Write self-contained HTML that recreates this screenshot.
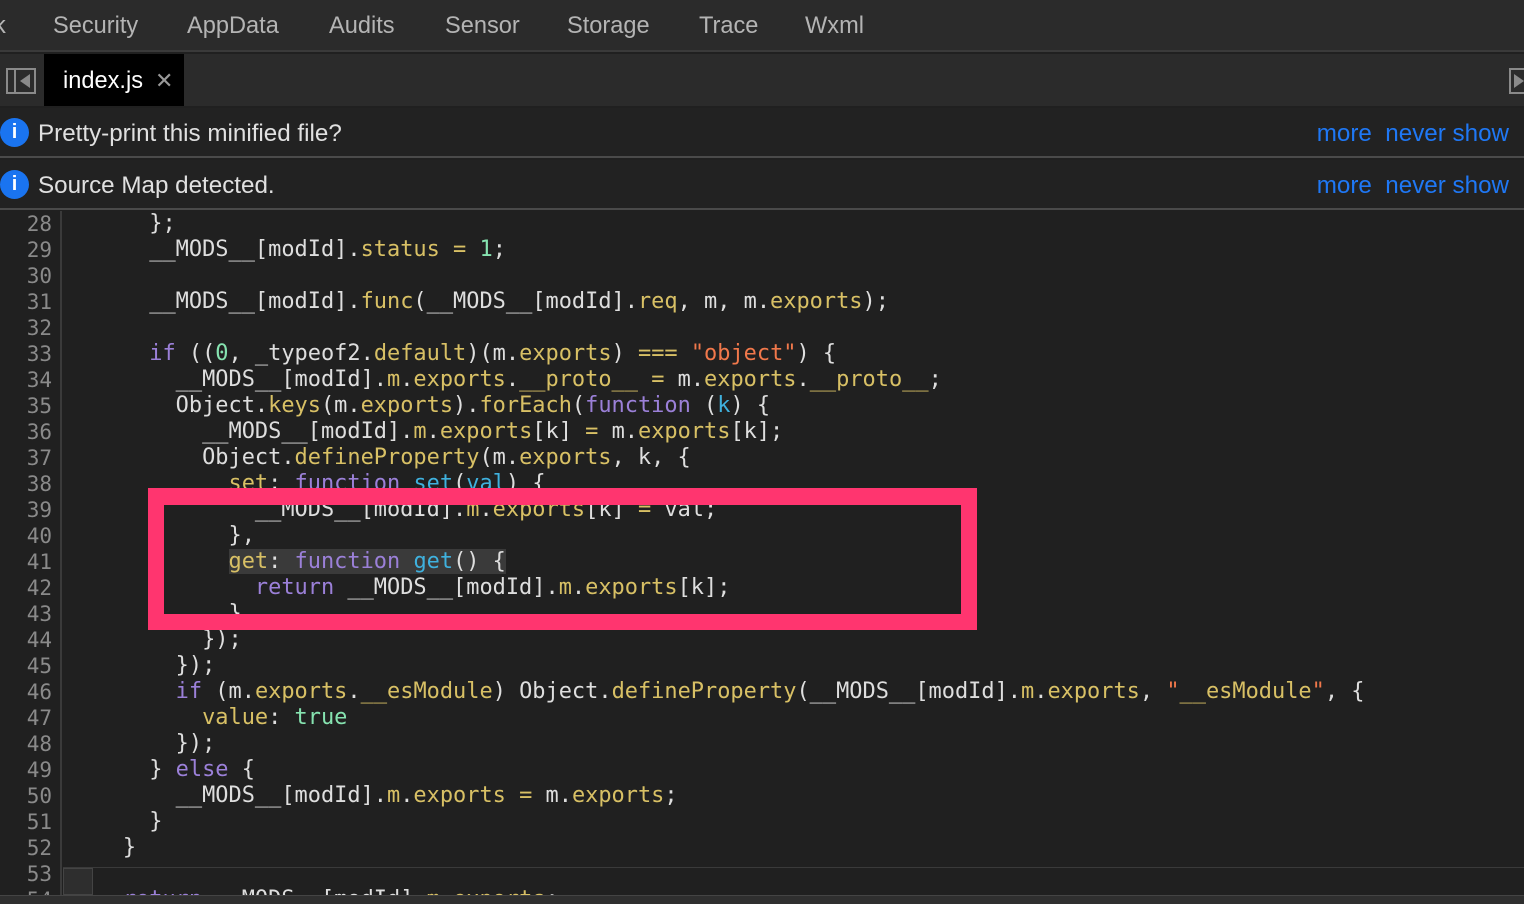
<!DOCTYPE html>
<html><head><meta charset="utf-8"><style>
*{margin:0;padding:0;box-sizing:border-box}
body{width:1524px;height:904px;overflow:hidden;background:#202020;font-family:"Liberation Sans",sans-serif;position:relative}
.top{position:absolute;left:0;top:0;width:1524px;height:52px;background:#2b2b2b;border-bottom:2px solid #3a3a3a}
.top span{position:absolute;top:13px;font-size:23.6px;color:#b4b4b4}
.tabs{position:absolute;left:0;top:54px;width:1524px;height:52px;background:#2b2b2b}
.tab{position:absolute;left:44px;top:0;width:140px;height:52px;background:#000;color:#fff;font-size:23.6px;padding:14px 0 0 19px}
.tab i{font-style:normal;color:#999;margin-left:12px;font-size:22px}
.info{position:absolute;left:0;width:1524px;height:50px;background:#222;border-bottom:2px solid #4a4a4a;color:#e0e0e0;font-size:24.2px}
.info .ic{position:absolute;left:0;top:10px;width:29px;height:29px;border-radius:50%;background:#1a74f0;color:#fff;font-weight:bold;font-size:20px;text-align:center;line-height:29px}
.info .t{position:absolute;left:38px;top:12px}
.info .l{position:absolute;right:15px;top:12px;color:#1f78f5}
.gut{position:absolute;left:0;top:211px;width:62px;height:684px;border-right:2px solid #3a3a3a;overflow:hidden}
.ln{position:absolute;right:8px;font-family:"DejaVu Sans Mono","Liberation Mono",monospace;font-size:21px;color:#8a8a8a;line-height:26px}
.code{position:absolute;left:70px;top:211px;width:1454px;height:684px;overflow:hidden;font-family:"DejaVu Sans Mono","Liberation Mono",monospace;font-size:21.95px;color:#dedede;white-space:pre;line-height:26px}
.k{color:#9b80d8}.p{color:#d8c065}.n{color:#86e3b0}.s{color:#f1784b}.c{color:#3fb1de}
.hl{background:#3a3a3a}
.box{position:absolute;left:148px;top:488px;width:829px;height:142px;border:16px solid #ff356f;border-top-width:17px}
</style></head><body>
<div class="top">
<span style="left:-6px">k</span><span style="left:53px">Security</span><span style="left:187px">AppData</span><span style="left:329px">Audits</span><span style="left:445px">Sensor</span><span style="left:567px">Storage</span><span style="left:699px">Trace</span><span style="left:805px">Wxml</span>
</div>
<div class="tabs">
<div style="position:absolute;left:6px;top:14px;width:30px;height:26px;border:2px solid #8a8a8a"><div style="position:absolute;left:6px;top:0;width:2px;height:22px;background:#8a8a8a"></div><div style="position:absolute;left:12px;top:4px;width:0;height:0;border-top:7px solid transparent;border-bottom:7px solid transparent;border-right:10px solid #8a8a8a"></div></div>
<div class="tab">index.js<i>✕</i></div>
<div style="position:absolute;left:1509px;top:14px;width:20px;height:26px;border:2px solid #8a8a8a"><div style="position:absolute;left:3px;top:4px;width:0;height:0;border-top:7px solid transparent;border-bottom:7px solid transparent;border-left:10px solid #8a8a8a"></div></div>
</div>
<div class="info" style="top:108px"><div class="ic">i</div><div class="t">Pretty-print this minified file?</div><div class="l">more&nbsp; never show</div></div>
<div class="info" style="top:160px"><div class="ic">i</div><div class="t">Source Map detected.</div><div class="l">more&nbsp; never show</div></div>
<div class="gut">
<div class="ln" style="top:0">28<br>29<br>30<br>31<br>32<br>33<br>34<br>35<br>36<br>37<br>38<br>39<br>40<br>41<br>42<br>43<br>44<br>45<br>46<br>47<br>48<br>49<br>50<br>51<br>52<br>53<br>54</div>
</div>
<div class="code">      };
      __MODS__[modId].<span class="p">status</span> <span class="p">=</span> <span class="n">1</span>;

      __MODS__[modId].<span class="p">func</span>(__MODS__[modId].<span class="p">req</span>, m, m.<span class="p">exports</span>);

      <span class="k">if</span> ((<span class="n">0</span>, _typeof2.<span class="p">default</span>)(m.<span class="p">exports</span>) <span class="p">===</span> <span class="s">"object"</span>) {
        __MODS__[modId].<span class="p">m</span>.<span class="p">exports</span>.<span class="p">__proto__</span> <span class="p">=</span> m.<span class="p">exports</span>.<span class="p">__proto__</span>;
        Object.<span class="p">keys</span>(m.<span class="p">exports</span>).<span class="p">forEach</span>(<span class="k">function</span> (<span class="c">k</span>) {
          __MODS__[modId].<span class="p">m</span>.<span class="p">exports</span>[k] <span class="p">=</span> m.<span class="p">exports</span>[k];
          Object.<span class="p">defineProperty</span>(m.<span class="p">exports</span>, k, {
            <span class="p">set</span>: <span class="k">function</span> <span class="c">set</span>(<span class="c">val</span>) {
              __MODS__[modId].<span class="p">m</span>.<span class="p">exports</span>[k] <span class="p">=</span> val;
            },
            <span class="hl"><span class="p">get</span>: <span class="k">function</span> <span class="c">get</span>() {</span>
              <span class="k">return</span> __MODS__[modId].<span class="p">m</span>.<span class="p">exports</span>[k];
            }
          });
        });
        <span class="k">if</span> (m.<span class="p">exports</span>.<span class="p">__esModule</span>) Object.<span class="p">defineProperty</span>(__MODS__[modId].<span class="p">m</span>.<span class="p">exports</span>, <span class="s">"</span><span class="p">__esModule</span><span class="s">"</span>, {
          <span class="p">value</span>: <span class="n">true</span>
        });
      } <span class="k">else</span> {
        __MODS__[modId].<span class="p">m</span>.<span class="p">exports</span> <span class="p">=</span> m.<span class="p">exports</span>;
      }
    }

    <span class="k">return</span> __MODS__[modId].<span class="p">m</span>.<span class="p">exports</span>;</div>
<div style="position:absolute;left:63px;top:867px;width:1461px;height:1px;background:#3a3a3a"></div>
<div style="position:absolute;left:63px;top:868px;width:30px;height:27px;background:#2e2e2e;border:1px solid #444"></div>
<div style="position:absolute;left:0;top:895px;width:1524px;height:9px;background:#2f2f2f;border-top:1px solid #444"></div>
<div class="box"></div>
</body></html>
